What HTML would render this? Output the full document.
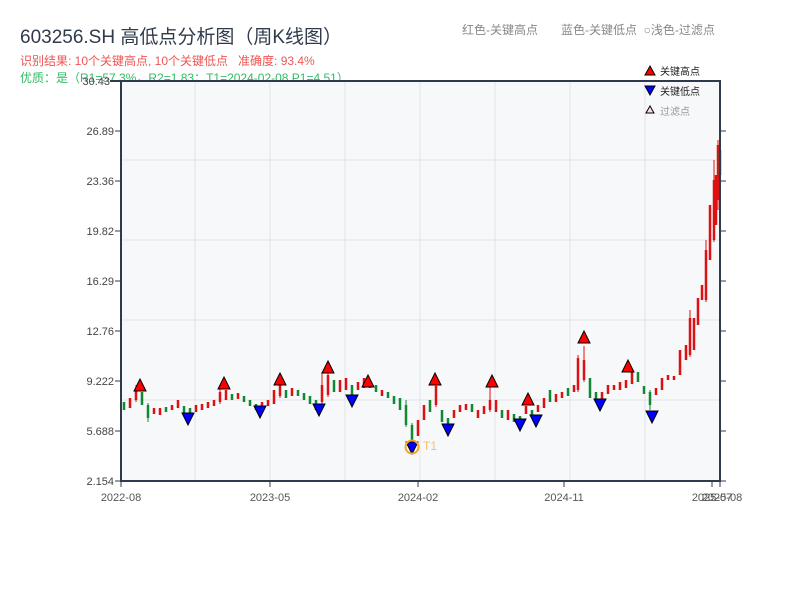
<!DOCTYPE html>
<html><head><meta charset="utf-8">
<style>
body{margin:0;width:800px;height:600px;background:#fff;font-family:"Liberation Sans","Noto Sans CJK SC",sans-serif;overflow:hidden;position:relative}
.t{position:absolute;white-space:nowrap}
</style></head><body>
<div class="t" style="left:20px;top:22px;font-size:19px;color:#2f3b4c">603256.SH 高低点分析图（周K线图）</div>
<div class="t" style="left:20px;top:52px;font-size:12px;color:#ee5555">识别结果: 10个关键高点, 10个关键低点&nbsp;&nbsp;&nbsp;准确度: 93.4%</div>
<div class="t" style="left:20px;top:69px;font-size:12px;color:#33bb66">优质：是（R1=57.3%，R2=1.83；T1=2024-02-08 P1=4.51）</div>
<div class="t" style="left:462px;top:21px;font-size:12px;color:#888">红色-关键高点</div>
<div class="t" style="left:561px;top:21px;font-size:12px;color:#888">蓝色-关键低点&nbsp;&nbsp;○浅色-过滤点</div>
<svg width="800" height="600" style="position:absolute;left:0;top:0">
<rect x="121" y="81" width="599" height="400" fill="#f7f8fa"/>
<g stroke="#e0e3e8" stroke-width="1">
<line x1="121" y1="160" x2="720" y2="160"/><line x1="121" y1="240" x2="720" y2="240"/><line x1="121" y1="320" x2="720" y2="320"/><line x1="121" y1="400" x2="720" y2="400"/>
<line x1="195" y1="81" x2="195" y2="481"/><line x1="270" y1="81" x2="270" y2="481"/><line x1="345" y1="81" x2="345" y2="481"/><line x1="420" y1="81" x2="420" y2="481"/><line x1="495" y1="81" x2="495" y2="481"/><line x1="570" y1="81" x2="570" y2="481"/><line x1="645" y1="81" x2="645" y2="481"/>
</g>
<!-- red candles -->
<path fill="none" stroke="#dd1111" stroke-width="2.5" d="M130 398V408M136 390V400M154 408V414M160 408V415M172 405V410M178 400V408M196 405V412M202 404V410M208 402V408M214 400V406M220 392V402M226 390V400M238 393V399M262 402V408M268 400V406M274 390V404M280 385V396M292 388V396M322 385V402M328 375V395M340 380V392M346 378V390M358 382V390M364 378V388M382 390V396M418 420V436M424 405V420M436 386V405M454 410V418M460 405V412M466 404V410M478 410V418M484 406V414M490 400V410M496 400V412M508 410V420M526 406V414M538 405V412M544 398V408M556 394V402M562 392V398M574 385V392M578 358V390M584 360V380M602 392V400M608 385V394M614 385V390M620 382V390M626 380V388M632 372V384M656 388V395M662 378V390M668 375V380M674 376V380M680 350V375M686 345V360M690 318V355M694 318V350M698 298V325M702 285V300M706 250V300M710 205V260M714 180V240M716 175V225M718 145V200"/>
<path fill="none" stroke="#dd1111" stroke-width="1" d="M136 385V402M220 385V404M280 378V398M322 372V404M328 370V397M436 383V407M490 384V412M578 355V392M584 346V382M714 160V242M718 140V210M690 310V357M706 240V302"/>
<!-- green candles -->
<path fill="none" stroke="#118833" stroke-width="2.5" d="M124 402V410M142 392V405M148 405V418M166 407V412M184 406V414M190 408V416M232 394V400M244 396V402M250 400V406M256 404V410M286 390V398M298 390V396M304 393V400M310 396V404M316 400V410M334 380V392M352 385V398M370 382V388M376 385V392M388 392V398M394 396V404M400 398V410M406 405V425M412 425V440M430 400V412M442 410V422M448 418V428M472 404V412M502 410V418M514 414V422M520 416V424M532 410V416M550 390V402M568 388V396M590 378V398M596 392V402M638 372V382M644 386V394M650 392V405M720 150V175"/>
<path fill="none" stroke="#118833" stroke-width="1" d="M148 403V422M412 423V442M650 390V410M720 113V180M406 400V427"/>
<g stroke="#2f3b4c" stroke-width="2" fill="none">
<path d="M121 81V481H720V81H110"/>
</g>
<g stroke="#2f3b4c" stroke-width="1">
<line x1="115" y1="131" x2="121" y2="131"/><line x1="115" y1="181" x2="121" y2="181"/><line x1="115" y1="231" x2="121" y2="231"/><line x1="115" y1="281" x2="121" y2="281"/><line x1="115" y1="331" x2="121" y2="331"/><line x1="115" y1="381" x2="121" y2="381"/><line x1="115" y1="431" x2="121" y2="431"/><line x1="115" y1="481" x2="121" y2="481"/>
<line x1="720" y1="131" x2="726" y2="131"/><line x1="720" y1="181" x2="726" y2="181"/><line x1="720" y1="231" x2="726" y2="231"/><line x1="720" y1="281" x2="726" y2="281"/><line x1="720" y1="331" x2="726" y2="331"/><line x1="720" y1="381" x2="726" y2="381"/><line x1="720" y1="431" x2="726" y2="431"/><line x1="720" y1="481" x2="726" y2="481"/>
<line x1="121" y1="481" x2="121" y2="487"/><line x1="270" y1="481" x2="270" y2="487"/><line x1="418" y1="481" x2="418" y2="487"/><line x1="564" y1="481" x2="564" y2="487"/><line x1="712" y1="481" x2="712" y2="487"/><line x1="720" y1="481" x2="720" y2="487"/>
</g>
<g font-size="11" fill="#444" text-anchor="end" font-family="Liberation Sans,sans-serif">
<text x="110" y="85">30.43</text><text x="114" y="135">26.89</text><text x="114" y="185">23.36</text><text x="114" y="235">19.82</text><text x="114" y="285">16.29</text><text x="114" y="335">12.76</text><text x="114" y="385">9.222</text><text x="114" y="435">5.688</text><text x="114" y="485">2.154</text>
</g>
<g font-size="11" fill="#555" text-anchor="middle" font-family="Liberation Sans,sans-serif">
<text x="121" y="501">2022-08</text><text x="270" y="501">2023-05</text><text x="418" y="501">2024-02</text><text x="564" y="501">2024-11</text><text x="712" y="501">2025-07</text><text x="722" y="501">2025-08</text>
</g>
<g stroke="#000" stroke-width="1">
<polygon points="140,379 146,391 134,391" fill="red"/>
<polygon points="224,377 230,389 218,389" fill="red"/>
<polygon points="280,373 286,385 274,385" fill="red"/>
<polygon points="328,361 334,373 322,373" fill="red"/>
<polygon points="368,375 374,387 362,387" fill="red"/>
<polygon points="435,373 441,385 429,385" fill="red"/>
<polygon points="492,375 498,387 486,387" fill="red"/>
<polygon points="528,393 534,405 522,405" fill="red"/>
<polygon points="584,331 590,343 578,343" fill="red"/>
<polygon points="628,360 634,372 622,372" fill="red"/>
<polygon points="182,413 194,413 188,425" fill="blue"/>
<polygon points="254,406 266,406 260,418" fill="blue"/>
<polygon points="313,404 325,404 319,416" fill="blue"/>
<polygon points="346,395 358,395 352,407" fill="blue"/>
<polygon points="406,442 418,442 412,454" fill="blue"/>
<polygon points="442,424 454,424 448,436" fill="blue"/>
<polygon points="514,419 526,419 520,431" fill="blue"/>
<polygon points="530,415 542,415 536,427" fill="blue"/>
<polygon points="594,399 606,399 600,411" fill="blue"/>
<polygon points="646,411 658,411 652,423" fill="blue"/>
</g>
<circle cx="412" cy="447" r="6.5" fill="none" stroke="#f5a623" stroke-width="2"/>
<text x="423" y="450" font-size="12" fill="#f5c06a">T1</text>
<polygon points="650,66 655,75 645,75" fill="red" stroke="#000"/>
<text x="660" y="75" font-size="10" fill="#222" font-family="Noto Sans CJK SC,sans-serif">关键高点</text>
<polygon points="645,86 655,86 650,95" fill="blue" stroke="#000"/>
<text x="660" y="95" font-size="10" fill="#222" font-family="Noto Sans CJK SC,sans-serif">关键低点</text>
<polygon points="650,106 654,113 646,113" fill="#fdd" stroke="#000"/>
<text x="660" y="115" font-size="10" fill="#999" font-family="Noto Sans CJK SC,sans-serif">过滤点</text>
</svg>
</body></html>
